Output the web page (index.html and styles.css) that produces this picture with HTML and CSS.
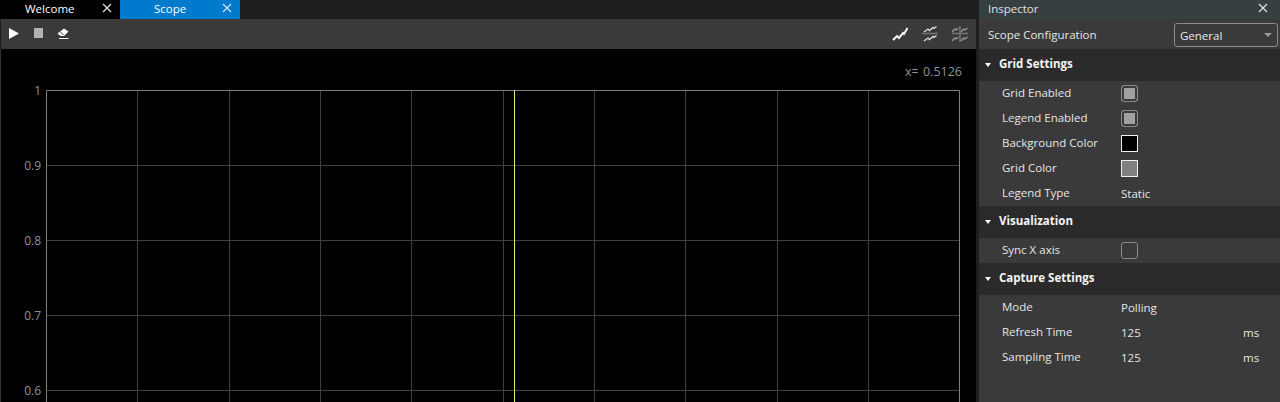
FILE: index.html
```html
<!DOCTYPE html>
<html lang="en">
<head>
<meta charset="utf-8">
<title>Scope</title>
<link rel="stylesheet" href="styles.css">
</head>
<body>
<div class="app">
  <main class="workspace">
    <div class="tabs">
      <div class="tab tab-welcome"><span class="tab-label">Welcome</span><svg class="close" viewBox="0 0 10 10"><path d="M1 1l8 8M9 1l-8 8"/></svg></div>
      <div class="tab tab-scope"><span class="tab-label">Scope</span><svg class="close" viewBox="0 0 10 10"><path d="M1 1l8 8M9 1l-8 8"/></svg></div>
    </div>
    <div class="toolbar">
      <div class="tool-group">
        <svg class="tool play" viewBox="0 0 10 11"><path d="M0 0l10 5.5L0 11z"/></svg>
        <span class="stop"></span>
        <svg class="tool erase" viewBox="0 0 12 11"><path class="fill" d="M7 0.500L11.500 3.500L7 8H3.500L0.500 5.500z"/><path class="cut" d="M3 3.500L6.500 7"/><path class="line" d="M2 10.500h9.500"/></svg>
      </div>
      <div class="tool-group tool-right">
        <svg class="chart-ico" viewBox="0 0 16 14"><path class="bright" d="M1 13l4-4 2 2 4-5 1 1 3.500-6"/></svg>
        <svg class="chart-ico dim" viewBox="0 0 16 16"><path d="M2 6l4-3 1.500 1.500L11 1.500l1 1 2.500-2"/><path d="M2 15l4-3 1.500 1.500L11 10.500l1 1 2.500-2"/><path class="bar" d="M0 7.500h16"/></svg>
        <svg class="chart-ico dimmer" viewBox="0 0 16 16"><path d="M0 6l3-3 1 1 2.500-2"/><path d="M9 6l3-3 1 1 2.500-2"/><path d="M0 15l3-3 1 1 2.500-2"/><path d="M9 15l3-3 1 1 2.500-2"/><path class="bar" d="M0 7.500h16M8 0v16"/></svg>
      </div>
    </div>
    <div class="plot">
      <svg class="plot-svg" viewBox="0 0 976 353">
        <path class="edge" d="M0.500 0V353"/>
        <g class="grid">
          <path d="M137.500 41V353M229.500 41V353M320.500 41V353M411.500 41V353M503.500 41V353M594.500 41V353M685.500 41V353M777.500 41V353M868.500 41V353"/>
          <path d="M46 116.500H960M46 191.500H960M46 266.500H960M46 341.500H960"/>
        </g>
        <path class="frame" d="M46.500 353V41.500H959.500V353"/>
        <path class="cursor" d="M514.500 41V353"/>
        <g class="axis">
          <text x="41" y="46" text-anchor="end">1</text>
          <text x="41" y="121" text-anchor="end">0.9</text>
          <text x="41" y="196" text-anchor="end">0.8</text>
          <text x="41" y="271" text-anchor="end">0.7</text>
          <text x="41" y="346" text-anchor="end">0.6</text>
          <text class="readout" x="962" y="27" text-anchor="end">x= 0.5126</text>
        </g>
      </svg>
    </div>
  </main>
  <aside class="inspector">
    <header class="insp-title"><span>Inspector</span><svg class="close close-insp" viewBox="0 0 10 10"><path d="M1 1l8 8M9 1l-8 8"/></svg></header>
    <div class="scope-config">
      <span>Scope Configuration</span>
      <div class="select"><span>General</span><i class="caret"></i></div>
    </div>
    <div class="section"><i class="caret caret-w"></i>Grid Settings</div>
    <div class="rows">
      <div class="row"><span class="name">Grid Enabled</span><span class="check on"></span></div>
      <div class="row"><span class="name">Legend Enabled</span><span class="check on"></span></div>
      <div class="row"><span class="name">Background Color</span><span class="swatch black"></span></div>
      <div class="row"><span class="name">Grid Color</span><span class="swatch gray"></span></div>
      <div class="row"><span class="name">Legend Type</span><span class="value">Static</span></div>
    </div>
    <div class="section"><i class="caret caret-w"></i>Visualization</div>
    <div class="rows">
      <div class="row"><span class="name">Sync X axis</span><span class="check"></span></div>
    </div>
    <div class="section"><i class="caret caret-w"></i>Capture Settings</div>
    <div class="rows">
      <div class="row"><span class="name">Mode</span><span class="value">Polling</span></div>
      <div class="row"><span class="name">Refresh Time</span><span class="value">125</span><span class="unit">ms</span></div>
      <div class="row"><span class="name">Sampling Time</span><span class="value">125</span><span class="unit">ms</span></div>
    </div>
  </aside>
</div>
</body>
</html>
```
FILE: styles.css
```css
* { box-sizing: border-box; }
html, body { margin: 0; height: 100%; overflow: hidden; background: #1e1e1e; }
body { font-family: "Open Sans", "Noto Sans", sans-serif; font-size: 11.5px; color: #e6e6e6; }
.app { display: flex; width: 1280px; height: 402px; }
.workspace { width: 976px; display: flex; flex-direction: column; background: #1e1e1e; }
.tabs { display: flex; height: 19px; flex: none; }
.tab { width: 120px; display: flex; align-items: center; position: relative; color: #fff; }
.tab-welcome { background: #000; }
.tab-scope { background: #007acc; }
.tab-label { position: absolute; left: 25px; top: 0; line-height: 17px; }
.tab-scope .tab-label { left: 34px; }
.close { width: 10px; height: 10px; position: absolute; right: 8px; top: 3px; fill: none; stroke: #e4e4e4; stroke-width: 1.200; }
.tab-scope .close { stroke: #cfe4f3; }
.toolbar { height: 30px; flex: none; margin-left: 1px; background: #3a3a3a; display: flex; align-items: center; justify-content: space-between; padding: 0 8px 2px 8px; }
.tool-group { display: flex; align-items: center; gap: 14px; }
.tool-right { gap: 14px; margin-top: 2px; }
.tool { display: block; }
.play { width: 10px; height: 11px; fill: #fff; }
.stop { width: 9px; height: 10px; background: #b2b2b2; margin-left: 1px; }
.erase { width: 12px; height: 11px; }
.erase .fill { fill: #fff; }
.erase .cut { stroke: #3a3a3a; fill: none; }
.erase .line { stroke: #fff; fill: none; }
.chart-ico { width: 16px; height: 16px; fill: none; stroke: #dcdcdc; stroke-width: 1.300; }
.chart-ico .bright { stroke: #fff; stroke-width: 1.900; }
.chart-ico .bar { stroke: #707070; stroke-width: 1.700; }
.chart-ico.dimmer { stroke: #969696; }
.plot { flex: 1; min-height: 0; background: #000; }
.plot-svg { display: block; width: 976px; height: 353px; }
.edge { stroke: #333; fill: none; }
.grid path { stroke: #3f3f3f; fill: none; stroke-width: 1; }
.frame { stroke: #808080; fill: none; stroke-width: 1; }
.cursor { stroke: #e6e670; fill: none; stroke-width: 1; }
.axis text { fill: #8a939b; font-family: "Open Sans", "Noto Sans", sans-serif; font-size: 12px; }
.axis .readout { word-spacing: 1px; font-size: 12.500px; }
.inspector { width: 301px; margin-left: 3px; flex: none; background: #3a3a3a; display: flex; flex-direction: column; }
.insp-title { height: 19px; flex: none; background: #363f42; display: flex; align-items: center; padding: 0 0 2px 9px; position: relative; color: #e0e0e0; }
.close-insp { right: 12px; top: 3px; }
.scope-config { height: 30px; flex: none; display: flex; align-items: center; justify-content: space-between; padding: 0 2px 0 9px; }
.select { width: 104px; height: 24px; border: 1px solid #8c8c8c; border-radius: 3px; display: flex; align-items: center; justify-content: space-between; padding: 0 5px; margin-top: 2px; }
.caret { width: 0; height: 0; border-left: 4px solid transparent; border-right: 4px solid transparent; border-top: 4px solid #9a9a9a; }
.caret-w { border-left-width: 3.500px; border-right-width: 3.500px; border-top: 4px solid #fff; margin-right: 8px; margin-top: 2px; }
.section { height: 32px; flex: none; background: #2a2a2a; display: flex; align-items: center; padding: 0 0 3px 6px; font-weight: 700; color: #f4f4f4; }
.rows { display: flex; flex-direction: column; }
.row { height: 25px; display: flex; align-items: center; padding-left: 23px; position: relative; }
.name { width: 119px; padding-bottom: 3px; }
.check { width: 17px; height: 17px; border: 1px solid #8a8a8a; border-radius: 3px; display: block; background: #3a3a3a; }
.check.on { background: #a0a0a0; box-shadow: inset 0 0 0 2px #3a3a3a; }
.swatch { width: 17px; height: 17px; border: 1px solid #f0f0f0; display: block; }
.swatch.black { background: #000; }
.swatch.gray { background: #808080; }
.unit { position: absolute; left: 264px; top: 5px; }
```
